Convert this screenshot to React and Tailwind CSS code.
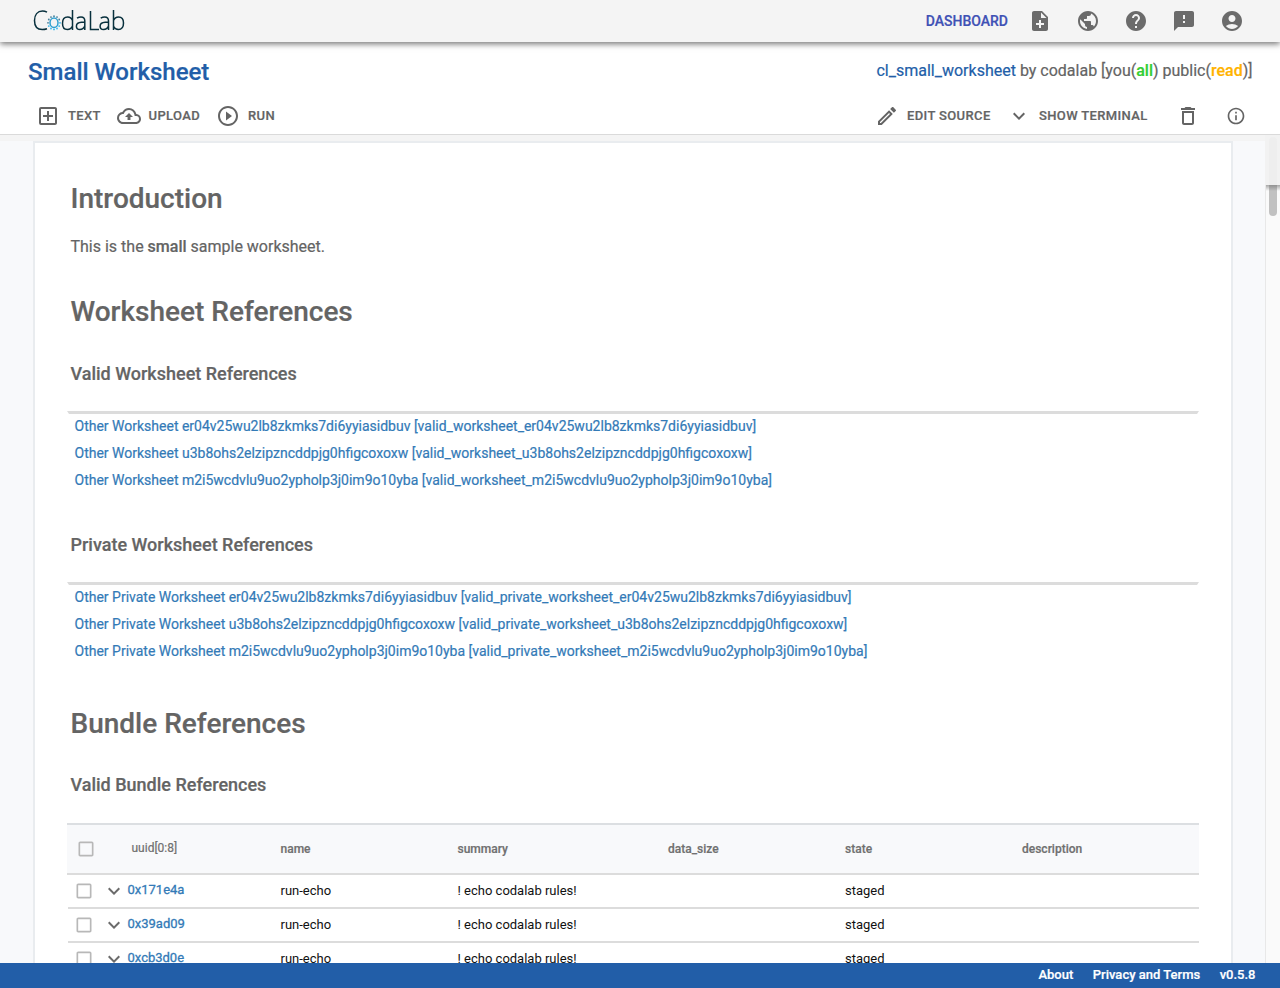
import React from "react";
import {
  MdNoteAdd, MdPublic, MdHelp, MdFeedback, MdAccountCircle, MdDeleteOutline, MdInfoOutline,
  MdExpandMore, MdCheckBoxOutlineBlank, MdOutlineAddBox, MdOutlineCloudUpload,
  MdPlayCircleOutline, MdOutlineEdit,
} from "react-icons/md";

function Logo() {
  const dots = [];
  for (let i = 0; i < 12; i++) {
    const a = (i * Math.PI) / 6;
    dots.push([21 + 6 * Math.cos(a), 12.8 + 6.6 * Math.sin(a), i]);
  }
  return (
    <svg width="92" height="24" viewBox="0 0 92 24" fill="none" stroke="#08303d" strokeWidth="1.5" className="relative top-px">
      <path d="M14 2.200C12.500 1.400 11 1 9.500 1C4.500 1 1.500 4.800 1.500 10.500C1.500 16 4.300 19.500 9.200 19.500C11 19.500 12.500 19.200 14 18.700" />
      <ellipse cx="21" cy="12.800" rx="4" ry="4.700" stroke="#2d9fd0" strokeWidth="1.500" />
      {dots.map(([x, y, i]) => (
        <circle key={i} cx={x} cy={y} r="0.9" stroke="none" fill={i < 6 ? "#35b8ee" : "#447f9b"} />
      ))}
      <path d="M39.500 0V20M39.500 10.500C38.500 8 37 7 34.700 7C31.400 7 29.500 9.300 29.500 13.200C29.500 17.300 31.200 19.500 34.400 19.500C37 19.500 38.500 18.300 39.500 16" />
      <path d="M44 8.200C45.300 7.400 46.500 7 48 7C50.700 7 51.800 8.200 51.800 11V20M51.800 12.100L48.500 12.300C45 12.500 43.400 13.700 43.400 16.200C43.400 18.300 44.700 19.500 46.900 19.500C49.200 19.500 50.800 18.400 51.800 16" />
      <path d="M57.500 1V19.500H66" />
      <path d="M67.700 8.200C69 7.400 70.200 7 71.700 7C74.400 7 75.500 8.200 75.500 11V20M75.500 12.100L72.200 12.300C68.700 12.500 67.100 13.700 67.100 16.200C67.100 18.300 68.400 19.500 70.600 19.500C72.900 19.500 74.500 18.400 75.500 16" />
      <path d="M80.500 0V20M80.500 10.500C81.500 8.200 83.200 7 85.500 7C88.700 7 90.500 9.200 90.500 13C90.500 17.300 88.600 19.500 85.300 19.500C83 19.500 81.500 18.500 80.500 16.300" />
    </svg>
  );
}

function TopBar() {
  return (
    <header className="relative z-20 flex h-[42px] items-center bg-[#f4f4f4] pl-[33px] shadow-[0_2px_6px_rgba(0,0,0,0.55)]">
      <Logo />
      <div className="ml-auto flex items-center pr-9 text-[#6b6b6b]">
        <span className="mr-5 text-sm font-medium text-[#3f51b5]">DASHBOARD</span>
        <div className="flex gap-6">
          <MdNoteAdd size={24} />
          <MdPublic size={24} />
          <MdHelp size={24} />
          <MdFeedback size={24} />
          <MdAccountCircle size={24} />
        </div>
      </div>
    </header>
  );
}

function SheetHeader() {
  return (
    <section className="h-[93px] border-b border-[#dadada] bg-white">
      <div className="flex h-[58px] items-center justify-between pr-7 pl-7">
        <h1 className="pt-[2px] text-2xl font-medium text-[#225ea8]">Small Worksheet</h1>
        <p className="-mr-[0.5px] text-base whitespace-nowrap">
          <span className="text-[#225ea8]">cl_small_worksheet</span> by codalab [you(
          <span className="font-medium text-[#32cd32]">all</span>) public(
          <span className="font-medium text-[#ffb300]">read</span>)]
        </p>
      </div>
      <div className="flex h-8 items-center text-[13px] font-medium tracking-[0.37px]">
        <MdOutlineAddBox size={24} className="ml-9" />
        <span className="ml-2 w-8">TEXT</span>
        <MdOutlineCloudUpload size={24} className="ml-[17px]" />
        <span className="ml-[7.5px] w-[51.5px]">UPLOAD</span>
        <MdPlayCircleOutline size={24} className="ml-4" />
        <span className="ml-2">RUN</span>
        <div className="ml-auto flex items-center pr-[34px]">
          <MdOutlineEdit size={24} />
          <span className="ml-2 w-[84px] whitespace-nowrap">EDIT SOURCE</span>
          <MdExpandMore size={24} className="ml-4" />
          <span className="ml-2 w-[109px] whitespace-nowrap">SHOW TERMINAL</span>
          <MdDeleteOutline size={24} className="ml-7" />
          <MdInfoOutline size={20} className="ml-[26px]" />
        </div>
      </div>
    </section>
  );
}

function Links({ items }) {
  return (
    <ul className="mx-8 border-x-2 border-t-[3px] border-x-transparent border-t-[#dcdcdc] pl-[5.5px] text-sm text-[#337ab7]">
      {items.map((t) => (
        <li key={t} className="h-[27px] leading-6 whitespace-nowrap">{t}</li>
      ))}
    </ul>
  );
}

const IDS = ["er04v25wu2lb8zkmks7di6yyiasidbuv", "u3b8ohs2elzipzncddpjg0hfigcoxoxw", "m2i5wcdvlu9uo2ypholp3j0im9o10yba"];

function BundleTable() {
  const cols = "grid grid-cols-[213px_177px_211px_177px_177px_1fr]";
  return (
    <div className="mx-8">
      <div className={cols + " h-[52px] items-center border-y-2 border-t-[#dcdfe2] border-b-[#dcdcdc] bg-[#f8f9fb] text-xs text-[#707070]"}>
        <div className="flex items-center pl-[9px]">
          <MdCheckBoxOutlineBlank size={20} className="text-[#b8b8b8]" />
          <span className="relative -top-px ml-[35.5px]">uuid[0:8]</span>
        </div>
        <span className="pl-[0.5px] font-medium">name</span>
        <span className="pl-[0.5px] font-medium">summary</span>
        <span className="font-medium">data_size</span>
        <span className="font-medium">state</span>
        <span className="font-medium">description</span>
      </div>
      {["0x171e4a", "0x39ad09", "0xcb3d0e"].map((id) => (
        <div key={id} className={cols + " ml-px h-[34px] items-center border-b-2 border-[#dcdcdc] text-[13px] text-[#111] [-webkit-text-stroke:0]"}>
          <div className="flex items-center pl-[6px]">
            <MdCheckBoxOutlineBlank size={20} className="text-[#b8b8b8]" />
            <MdExpandMore size={24} className="ml-2 text-[#6b6b6b]" />
            <span className="relative -top-px ml-[1.5px] text-[13px] text-[#337ab7] [-webkit-text-stroke:0.3px]">{id}</span>
          </div>
          <span className="-ml-[0.5px]">run-echo</span>
          <span className="-ml-[0.5px]">! echo codalab rules!</span>
          <span />
          <span className="-ml-px">staged</span>
          <span />
        </div>
      ))}
    </div>
  );
}

export default function App() {
  return (
    <div className="flex h-[988px] w-[1280px] flex-col overflow-hidden bg-[#f8f9fb] font-[Roboto,sans-serif] text-[#646464] [-webkit-text-stroke:0.2px]">
      <TopBar />
      <SheetHeader />
      <div className="flex min-h-0 flex-1">
        <main className="min-w-0 flex-1 overflow-hidden">
          <div className="h-[6px] bg-[#f4f4f4]" />
          <article className="ml-[33px] h-[1000px] w-[1200px] border-2 border-[#e9ecef] bg-white">
            <h2 className="mt-[36px] ml-[35.5px] h-10 text-[28px] leading-10 font-medium">Introduction</h2>
            <p className="mt-[16px] ml-[35.5px] h-6 text-base leading-6">
              This is the <b className="font-medium">small</b> sample worksheet.
            </p>
            <h2 className="mt-[33px] ml-[35.5px] h-10 text-[28px] leading-10 font-medium">Worksheet References</h2>
            <h3 className="mt-[30px] ml-[35.5px] h-6 text-lg leading-6 font-medium">Valid Worksheet References</h3>
            <div className="h-[25px]" />
            <Links items={IDS.map((i) => `Other Worksheet ${i} [valid_worksheet_${i}]`)} />
            <h3 className="mt-[38px] ml-[35.5px] h-6 text-lg leading-6 font-medium">Private Worksheet References</h3>
            <div className="h-[25px]" />
            <Links items={IDS.map((i) => `Other Private Worksheet ${i} [valid_private_worksheet_${i}]`)} />
            <h2 className="mt-[38px] ml-[35.5px] h-10 text-[28px] leading-10 font-medium">Bundle References</h2>
            <h3 className="mt-[29px] ml-[35.5px] h-6 text-lg leading-6 font-medium">Valid Bundle References</h3>
            <div className="h-[26px]" />
            <BundleTable />
          </article>
        </main>
        <aside className="w-[15px] border-l border-[#e8e8e8] bg-[#fafafa]">
          <div className="-ml-px h-[50px] bg-[#f2f2f2] pt-[2px] pl-1">
            <div className="h-12 w-2 rounded-t-full bg-[#eeeeee]" />
          </div>
          <div className="h-[31px] bg-gradient-to-b from-[#a8a8a8] to-transparent to-[6px] pl-[3px]">
            <div className="h-[31px] w-2 rounded-b-full bg-gradient-to-b from-[#929292] to-[#c1c1c1] to-[6px]" />
          </div>
        </aside>
      </div>
      <footer className="flex h-[25px] shrink-0 items-center justify-end gap-[19.5px] bg-[#225ea8] pr-[25px] pb-[2px] text-[13px] font-medium text-white">
        <span>About</span><span>Privacy and Terms</span><span className="-mr-[0.5px]">v0.5.8</span>
      </footer>
    </div>
  );
}
